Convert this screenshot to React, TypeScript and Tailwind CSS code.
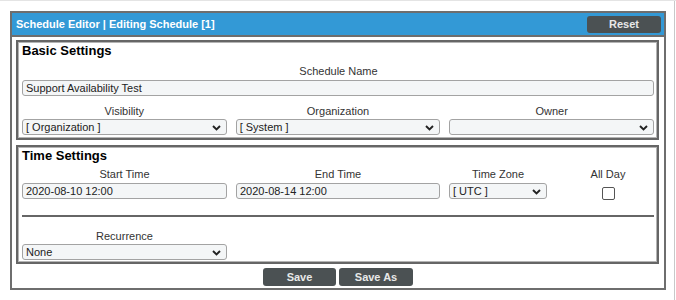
import React from "react";

function Chevron() {
  return (
    <svg width="9" height="6" viewBox="0 0 9 6" className="absolute right-[5px] top-[5px]">
      <path d="M1 1 L4.5 4.5 L8 1" fill="none" stroke="#222" strokeWidth="1.9" />
    </svg>
  );
}

function SelectBox({ value, className }: { value: string; className: string }) {
  return (
    <div className={`relative h-[16px] rounded-[3px] border border-[#a3a3a3] bg-[#f4f6f7] pl-[3px] text-[11px] leading-[14px] text-[#222] ${className}`}>
      {value}
      <Chevron />
    </div>
  );
}

function TextBox({ value, className }: { value: string; className: string }) {
  return (
    <div className={`h-[16px] rounded-[3px] border border-[#a3a3a3] bg-[#f4f6f7] pl-[3px] text-[11px] leading-[14px] text-[#222] ${className}`}>
      {value}
    </div>
  );
}

function Label({ text, className = "" }: { text: string; className?: string }) {
  return <div className={`h-[14px] text-center text-[11px] leading-[14px] text-[#333] ${className}`}>{text}</div>;
}

export default function App() {
  return (
    <div className="h-[300px] w-[676px] border-t border-t-[#e4e4e4] bg-white font-['Liberation_Sans',Arial,sans-serif]">
      <div className="flex h-[299px] w-[675px] border-r border-r-[#c8c8c8] pt-[10px]">
        <div className="ml-[10px] h-[279px] w-[656px] border-2 border-[#6e6e6e]">
          <div className="flex h-[24px] items-center justify-between border-b-2 border-[#6e6e6e] bg-[#3399d6] pl-[4px] pr-[3px]">
            <span className="text-[11px] font-bold text-white">Schedule Editor | Editing Schedule [1]</span>
            <button className="h-[17px] w-[74px] rounded-[3px] bg-[#4b5153] text-[11px] font-bold leading-[17px] text-[#e8e8e8]">
              Reset
            </button>
          </div>

          <div className="pl-[4px] pr-[5px] pt-[3px]">
            <div className="h-[100px] border-2 border-[#666] shadow-[inset_0_0_0_1px_#b4b4b4]">
              <div className="pl-[4px] pr-[2px] pt-[1px]">
                <div className="h-[15px] text-[13px] font-bold leading-[15px] text-black">Basic Settings</div>
                <Label text="Schedule Name" className="mt-[6px]" />
                <TextBox value="Support Availability Test" className="mt-[2px] w-[632px]" />
                <div className="mt-[8px] grid w-[632px] grid-cols-3 gap-x-[9px]">
                  <Label text="Visibility" />
                  <Label text="Organization" />
                  <Label text="Owner" />
                </div>
                <div className="mt-[1px] grid w-[632px] grid-cols-3 gap-x-[9px]">
                  <SelectBox value="[ Organization ]" className="" />
                  <SelectBox value="[ System ]" className="" />
                  <SelectBox value="" className="" />
                </div>
              </div>
            </div>

            <div className="mt-[5px] h-[119px] border-2 border-[#666] shadow-[inset_0_0_0_1px_#b4b4b4]">
              <div className="pl-[4px] pr-[2px] pt-[1px]">
                <div className="h-[15px] text-[13px] font-bold leading-[15px] text-black">Time Settings</div>
                <div className="mt-[4px] flex gap-x-[9px]">
                  <div className="w-[205px]">
                    <Label text="Start Time" />
                    <TextBox value="2020-08-10 12:00" className="mt-[2px]" />
                  </div>
                  <div className="w-[204px]">
                    <Label text="End Time" />
                    <TextBox value="2020-08-14 12:00" className="mt-[2px]" />
                  </div>
                  <div className="w-[98px]">
                    <Label text="Time Zone" />
                    <SelectBox value="[ UTC ]" className="mt-[2px]" />
                  </div>
                  <div className="ml-[32px] flex w-[40px] flex-col items-center">
                    <Label text="All Day" />
                    <div className="mt-[6px] h-[13px] w-[13px] rounded-[2px] border border-[#555] bg-white" />
                  </div>
                </div>
                <div className="mt-[15px] h-[2px] w-[632px] bg-[#666]" />
                <div className="mt-[12px] w-[205px]">
                  <Label text="Recurrence" />
                  <SelectBox value="None" className="mt-[1px]" />
                </div>
              </div>
            </div>
          </div>

          <div className="mt-[4px] flex justify-center gap-x-[3px]">
            <button className="h-[18px] w-[73px] rounded-[3px] bg-[#4b5153] text-[11px] font-bold leading-[18px] text-[#e8e8e8]">
              Save
            </button>
            <button className="h-[18px] w-[74px] rounded-[3px] bg-[#4b5153] text-[11px] font-bold leading-[18px] text-[#e8e8e8]">
              Save As
            </button>
          </div>
        </div>
      </div>
    </div>
  );
}
